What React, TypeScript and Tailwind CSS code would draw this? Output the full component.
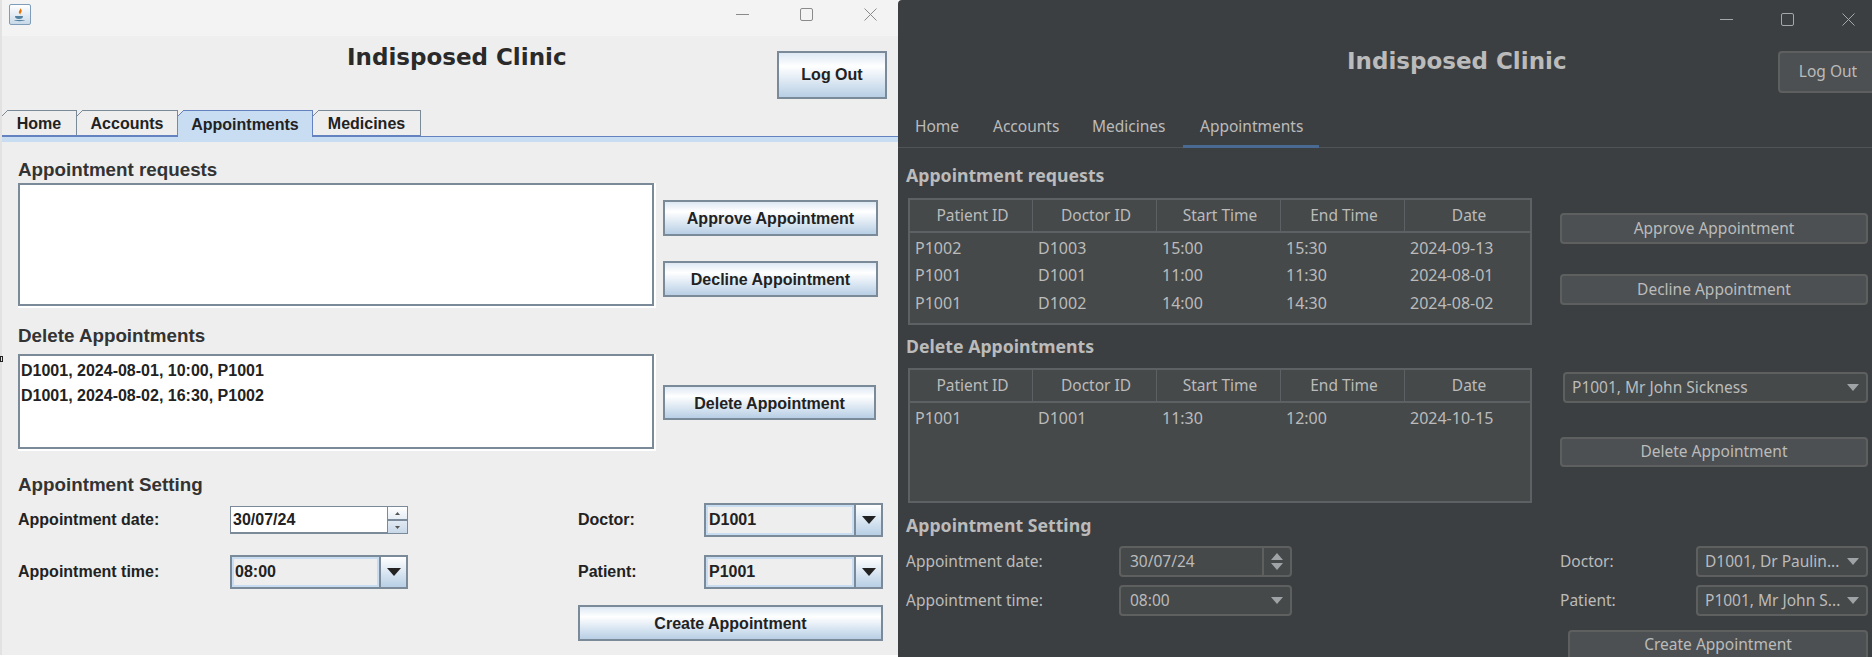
const requests = [
  ['P1002', 'D1003', '15:00', '15:30', '2024-09-13'],
  ['P1001', 'D1001', '11:00', '11:30', '2024-08-01'],
  ['P1001', 'D1002', '14:00', '14:30', '2024-08-02'],
];
const deletions = [['P1001', 'D1001', '11:30', '12:00', '2024-10-15']];
const columns = ['Patient ID', 'Doctor ID', 'Start Time', 'End Time', 'Date'];

function WindowIcon({ kind }: { kind: 'min' | 'max' | 'close' }) {
  return (
    <svg width="13" height="13" viewBox="0 0 13 13" fill="none" stroke="currentColor" strokeWidth="1">
      {kind === 'min' && <path d="M0 6.500h13" />}
      {kind === 'max' && <rect x="0.500" y="0.500" width="12" height="12" rx="1.500" />}
      {kind === 'close' && <path d="M0.500 0.500l12 12M12.500 0.500l-12 12" />}
    </svg>
  );
}

function MetalButton({ label, className }: { label: string; className: string }) {
  return (
    <button className={`flex items-center justify-center border-2 border-[#7a8a99] bg-gradient-to-b from-[#dde8f3] via-[#ffffff] via-30% to-[#b8cfe5] text-[16px] font-bold text-[#222] ${className}`}>
      {label}
    </button>
  );
}

function MetalCombo({ value, className }: { value: string; className: string }) {
  return (
    <div className={`flex h-[34px] border-2 border-[#7a8a99] ${className}`}>
      <div className="flex flex-1 items-center border-2 border-[#c8ddf2] pl-[1px] text-[16px] font-bold text-[#222]">{value}</div>
      <div className="flex w-[27px] items-center justify-center border-l-2 border-[#7a8a99] bg-gradient-to-b from-[#ffffff] to-[#b8cfe5]">
        <svg width="14" height="8" viewBox="0 0 14 8"><path d="M0 0h14L7 8z" fill="#222" /></svg>
      </div>
    </div>
  );
}

function LightTab({ label, className, active }: { label: string; className: string; active?: boolean }) {
  return (
    <div className={`relative flex items-center justify-center border-r border-t pt-[2px] text-[16px] font-bold text-[#222] ${active ? 'h-[27px] border-[#6382bf] bg-[#c8ddf2]' : 'h-[26px] border-[#7a8a99] border-b border-b-[#6382bf]'} ${className}`}>
      <svg width="6" height="6" viewBox="0 0 6 6" className="absolute left-0 top-[-1px]">
        <path d="M0 0h6L0 6z" fill="#eeeeee" />
        <path d="M0 6L6 0" stroke={active ? '#6382bf' : '#7a8a99'} strokeWidth="1" />
      </svg>
      {label}
    </div>
  );
}

function DarkButton({ label, className }: { label: string; className: string }) {
  return (
    <button className={`flex shrink-0 items-center justify-center rounded-[4px] border-2 border-[#5e6060] bg-[#4c5052] text-[#bbbbbb] ${className}`}>
      {label}
    </button>
  );
}

function DarkCombo({ value, className }: { value: string; className: string }) {
  return (
    <div className={`flex h-[31px] shrink-0 items-center justify-between rounded-[4px] border-2 border-[#5e6060] bg-[#45494a] pl-[7px] pr-[7px] text-[#bbbbbb] ${className}`}>
      <span>{value}</span>
      <svg width="12" height="7" viewBox="0 0 12 7"><path d="M0 0h12L6 7z" fill="#a0a3a5" /></svg>
    </div>
  );
}

function DarkTable({ rows, className }: { rows: string[][]; className: string }) {
  return (
    <div className={`w-[624px] shrink-0 border-2 border-[#5e6163] bg-[#45494a] ${className}`}>
      <div className="grid h-[33px] grid-cols-[123px_124px_124px_124px_125px] border-b-2 border-[#5e6163]">
        {columns.map((c, i) => (
          <div key={c} className={`flex items-center justify-center pl-[3px] pt-[1px] ${i < 4 ? 'border-r border-[#5e6163]' : ''}`}>{c}</div>
        ))}
      </div>
      <div className="pt-[1px] text-[16px]">
        {rows.map((row) => (
          <div key={row.join()} className="grid h-[27.5px] grid-cols-[123px_124px_124px_124px_125px] items-center">
            {row.map((cell) => (
              <div key={cell} className="pl-[5px]">{cell}</div>
            ))}
          </div>
        ))}
      </div>
    </div>
  );
}

export default function App() {
  return (
    <div className="flex h-[657px] w-[1872px] overflow-hidden bg-white">
      {/* Metal look and feel */}
      <div className="relative flex h-[655px] w-[898px] shrink-0 flex-col border-l-2 border-[#e2e2e2] bg-[#eeeeee] font-['Liberation_Sans',sans-serif]">
        <div className="absolute left-[-2px] top-[356px] h-[6px] w-[3px] border border-[#222]" />
        <div className="flex h-[36px] shrink-0 items-center bg-[#f3f3f3] pb-[7px] pl-[7px] pr-[21px]">
          <div className="flex h-[21px] w-[22px] items-center justify-center rounded-[2px] border border-[#7f9db9] bg-gradient-to-b from-[#ffffff] to-[#c9d9e8]">
            <svg width="14" height="16" viewBox="0 0 14 16">
              <path d="M7 1c1 2-2 3-1 5 .4.8 1 1 1.6 1.6C7 5.500 9.500 5 8.500 3 8.200 2.300 7.600 1.600 7 1z" fill="#e76f00" />
              <path d="M2 9h8c0 2-1 3-4 3S2 11 2 9zM1 13h11c-1 1.500-10 1.500-11 0z" fill="#5382a1" />
            </svg>
          </div>
          <div className="ml-auto flex items-center gap-[51px] text-[#8a8a8a]">
            <WindowIcon kind="min" />
            <WindowIcon kind="max" />
            <WindowIcon kind="close" />
          </div>
        </div>
        <div className="flex h-[74px] shrink-0 items-start">
          <h1 className="ml-[345px] mt-[7px] font-['DejaVu_Sans',sans-serif] text-[23px] font-bold leading-[28px] text-[#2a2a2a]">Indisposed Clinic</h1>
          <MetalButton label="Log Out" className="ml-auto mr-[11px] mt-[15px] h-[48px] w-[110px]" />
        </div>
        <div className="flex h-[27px] shrink-0 items-start border-b border-[#6382bf]">
          <LightTab label="Home" className="w-[75px]" />
          <LightTab label="Accounts" className="w-[101px]" />
          <LightTab label="Appointments" active className="w-[135px]" />
          <LightTab label="Medicines" className="w-[108px]" />
        </div>
        <div className="h-[5px] shrink-0 bg-[#c8ddf2]" />
        <div className="flex flex-col pl-[16px]">
          <h2 className="mt-[16px] h-[24px] text-[18.8px] font-bold leading-[24px] text-[#333]">Appointment requests</h2>
          <div className="mt-[1px] flex">
            <div className="h-[123px] w-[636px] border-2 border-[#7a8a99] bg-white shadow-[1px_1px_0_1px_#ffffff]" />
            <div className="ml-[9px] flex flex-col pt-[17px]">
              <MetalButton label="Approve Appointment" className="h-[36px] w-[215px] pt-[2px]" />
              <MetalButton label="Decline Appointment" className="mt-[25px] h-[36px] w-[215px] pt-[2px]" />
            </div>
          </div>
          <h2 className="mt-[18px] h-[24px] text-[18.8px] font-bold leading-[24px] text-[#333]">Delete Appointments</h2>
          <div className="mt-[6px] flex">
            <div className="h-[95px] w-[636px] border-2 border-[#7a8a99] bg-white pl-[1px] text-[16px] font-bold leading-[25px] text-[#222] shadow-[1px_1px_0_1px_#ffffff]">
              <div className="mt-[2px]">D1001, 2024-08-01, 10:00, P1001</div>
              <div>D1001, 2024-08-02, 16:30, P1002</div>
            </div>
            <MetalButton label="Delete Appointment" className="ml-[9px] mt-[31px] h-[35px] w-[213px] pt-[2px]" />
          </div>
          <h2 className="mt-[24px] h-[24px] text-[18.8px] font-bold leading-[24px] text-[#333]">Appointment Setting</h2>
          <div className="mt-[6px] flex h-[34px] items-center text-[16px] font-bold text-[#222]">
            <span className="w-[212px]">Appointment date:</span>
            <div className="flex h-[28px] w-[178px]">
              <div className="flex flex-1 items-center border-b-2 border-l border-t border-[#7a8a99] bg-white pl-[2px]">30/07/24</div>
              <div className="flex w-[21px] flex-col border border-[#7a8a99] bg-gradient-to-b from-[#ffffff] to-[#c8d8e8]">
                <div className="flex flex-1 items-center justify-center border-b-2 border-[#7a8a99]">
                  <svg width="5" height="3" viewBox="0 0 5 3"><path d="M0 3h5L2.500 0z" fill="#555" /></svg>
                </div>
                <div className="flex flex-1 items-center justify-center">
                  <svg width="5" height="3" viewBox="0 0 5 3"><path d="M0 0h5L2.500 3z" fill="#555" /></svg>
                </div>
              </div>
            </div>
            <span className="ml-[170px] w-[126px]">Doctor:</span>
            <MetalCombo value="D1001" className="w-[179px]" />
          </div>
          <div className="mt-[18px] flex h-[34px] items-center text-[16px] font-bold text-[#222]">
            <span className="w-[212px]">Appointment time:</span>
            <MetalCombo value="08:00" className="w-[178px]" />
            <span className="ml-[170px] w-[126px]">Patient:</span>
            <MetalCombo value="P1001" className="w-[179px]" />
          </div>
          <MetalButton label="Create Appointment" className="ml-[560px] mt-[16px] h-[36px] w-[305px] pt-[2px]" />
        </div>
      </div>

      {/* Darcula look and feel */}
      <div className="flex h-full min-w-0 flex-1 flex-col rounded-tl-[4px] bg-[#3c3f41] font-['Noto_Sans',sans-serif] text-[15.5px] text-[#bbbbbb]">
        <div className="flex h-[36px] shrink-0 items-center justify-end gap-[48px] pr-[17px] pt-[2px] text-[#a5a7a9]">
          <WindowIcon kind="min" />
          <WindowIcon kind="max" />
          <WindowIcon kind="close" />
        </div>
        <div className="flex h-[74px] shrink-0 items-start">
          <h1 className="ml-[449px] mt-[11px] font-['DejaVu_Sans',sans-serif] text-[23px] font-bold leading-[28px] text-[#bbbbbb]">Indisposed Clinic</h1>
          <DarkButton label="Log Out" className="ml-auto mr-[-6px] mt-[15px] h-[42px] w-[100px]" />
        </div>
        <div className="relative flex h-[38px] shrink-0 items-center border-b border-[#515457] pb-[4px] pl-[17px]">
          <span className="w-[78px]">Home</span>
          <span className="w-[99px]">Accounts</span>
          <span className="w-[108px]">Medicines</span>
          <span>Appointments</span>
          <div className="absolute bottom-[-1px] left-[285px] h-[3px] w-[136px] bg-[#4a6a94]" />
        </div>
        <div className="flex shrink-0 pl-[8px]">
          <div className="flex w-[654px] shrink-0 flex-col">
            <h2 className="mt-[15px] h-[24px] text-[17.7px] font-bold leading-[24px]">Appointment requests</h2>
            <DarkTable rows={requests} className="ml-[2px] mt-[11px] h-[127px]" />
            <h2 className="mt-[9px] h-[24px] text-[17.7px] font-bold leading-[24px]">Delete Appointments</h2>
            <DarkTable rows={deletions} className="ml-[2px] mt-[10px] h-[135px]" />
            <h2 className="mt-[10px] h-[24px] text-[17.7px] font-bold leading-[24px]">Appointment Setting</h2>
          </div>
          <div className="flex w-[308px] shrink-0 flex-col pt-[65px]">
            <DarkButton label="Approve Appointment" className="h-[31px] w-[308px]" />
            <DarkButton label="Decline Appointment" className="mt-[30px] h-[31px] w-[308px]" />
            <DarkCombo value="P1001, Mr John Sickness" className="ml-[3px] mt-[67px] w-[305px]" />
            <DarkButton label="Delete Appointment" className="mt-[34px] h-[30px] w-[308px]" />
          </div>
        </div>
        <div className="mt-[9px] flex h-[31px] shrink-0 items-center pl-[8px]">
          <span className="w-[213px]">Appointment date:</span>
          <div className="flex h-[31px] w-[173px] items-center rounded-[4px] border-2 border-[#5e6060] bg-[#45494a]">
            <span className="flex-1 pl-[9px]">30/07/24</span>
            <div className="flex h-full w-[28px] items-center justify-center border-l-2 border-[#5e6060]">
              <svg width="12" height="17" viewBox="0 0 12 17"><path d="M0 7L6 0l6 7zM0 10h12l-6 7z" fill="#a0a3a5" /></svg>
            </div>
          </div>
          <span className="ml-[268px] w-[136px]">Doctor:</span>
          <DarkCombo value="D1001, Dr Paulin..." className="w-[172px]" />
        </div>
        <div className="mt-[8px] flex h-[31px] shrink-0 items-center pl-[8px]">
          <span className="w-[213px]">Appointment time:</span>
          <DarkCombo value="08:00" className="w-[173px] pl-[9px]" />
          <span className="ml-[268px] w-[136px]">Patient:</span>
          <DarkCombo value="P1001, Mr John S..." className="w-[172px]" />
        </div>
        <DarkButton label="Create Appointment" className="ml-[670px] mt-[14px] h-[30px] w-[300px]" />
      </div>
    </div>
  );
}
